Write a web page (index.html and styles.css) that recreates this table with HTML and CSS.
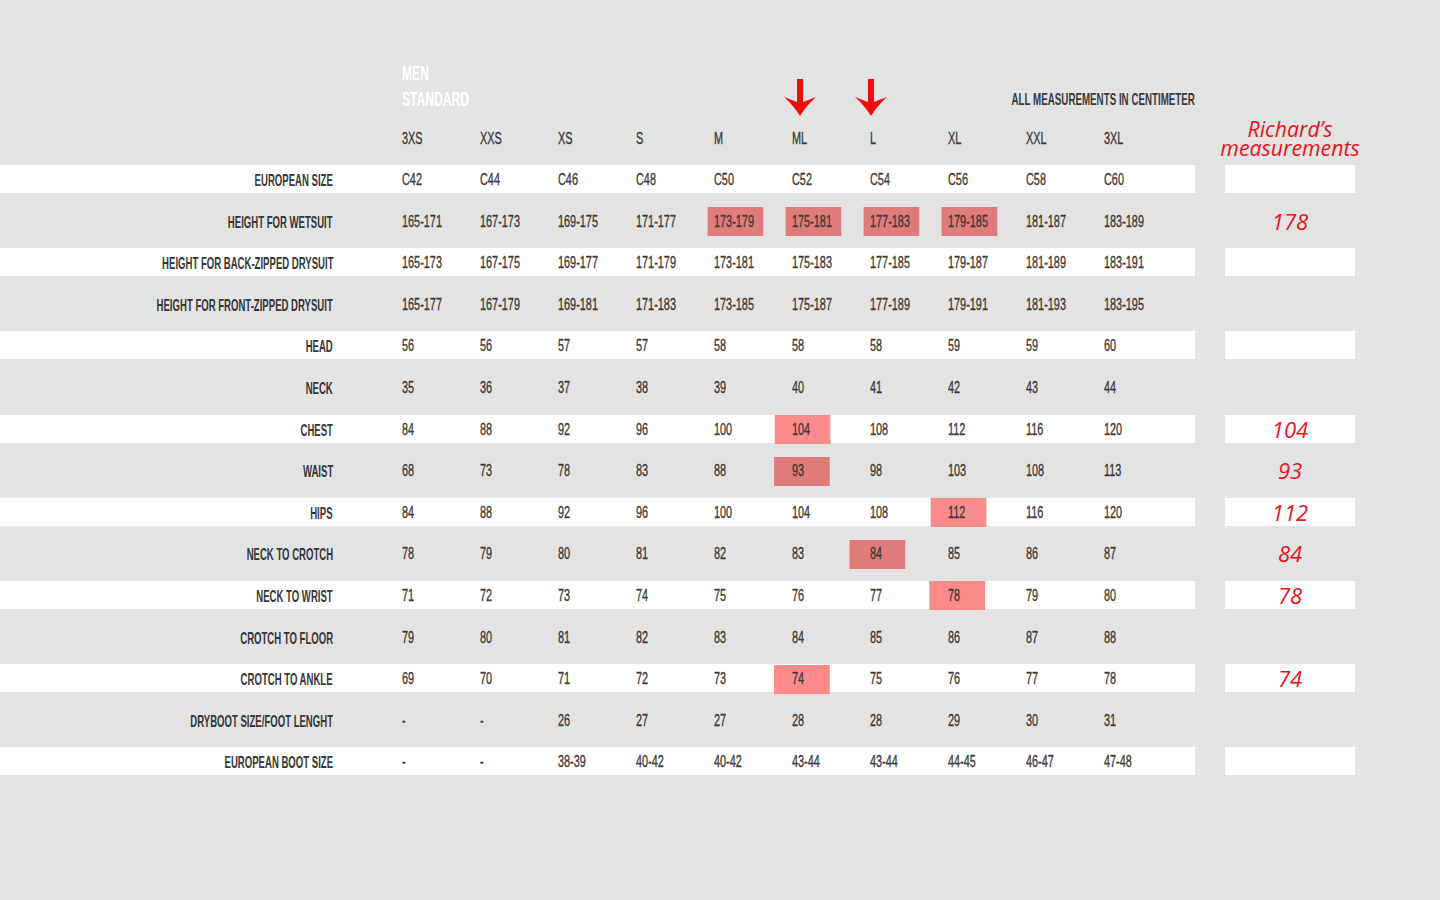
FILE: index.html
```html
<!DOCTYPE html>
<html lang="en">
<head>
<meta charset="utf-8">
<title>Men Standard size chart</title>
<link rel="stylesheet" href="styles.css">
</head>
<body>
<div class="page">
  <div class="row title-row">
    <div class="main">
      <div class="men"><div><span class="t">MEN</span></div><div><span class="t">STANDARD</span></div></div>
      <svg class="arrow arrow-ml" viewBox="0 0 32 37" width="32" height="37"><path d="M0 18 L13 23 L13 0 L19 0 L19 23 L32 18 Q22 27 16 37 Q10 27 0 18 Z" fill="#f20d0d"/></svg>
      <svg class="arrow arrow-l" viewBox="0 0 32 37" width="32" height="37"><path d="M0 18 L13 23 L13 0 L19 0 L19 23 L32 18 Q22 27 16 37 Q10 27 0 18 Z" fill="#f20d0d"/></svg>
      <div class="unit"><span class="t">ALL MEASUREMENTS IN CENTIMETER</span></div>
    </div>
    <div class="mine"></div>
  </div>

  <div class="row sizes-row">
    <div class="main">
      <div></div><div></div>
      <div class="v"><span>3XS</span></div>
      <div class="v"><span>XXS</span></div>
      <div class="v"><span>XS</span></div>
      <div class="v"><span>S</span></div>
      <div class="v"><span>M</span></div>
      <div class="v"><span>ML</span></div>
      <div class="v"><span>L</span></div>
      <div class="v"><span>XL</span></div>
      <div class="v"><span>XXL</span></div>
      <div class="v"><span>3XL</span></div>
    </div>
    <div class="mine"><div class="hand rich"><div>Richard’s</div><div>measurements</div></div></div>
  </div>

  <div class="table">
    <div class="row band">
      <div class="main">
        <div class="lab"><span>EUROPEAN SIZE</span></div><div></div>
        <div class="v"><span>C42</span></div><div class="v"><span>C44</span></div><div class="v"><span>C46</span></div><div class="v"><span>C48</span></div><div class="v"><span>C50</span></div><div class="v"><span>C52</span></div><div class="v"><span>C54</span></div><div class="v"><span>C56</span></div><div class="v"><span>C58</span></div><div class="v"><span>C60</span></div>
      </div>
      <div class="mine"></div>
    </div>

    <div class="row">
      <div class="main">
        <div class="lab"><span>HEIGHT FOR WETSUIT</span></div><div></div>
        <div class="v"><span>165-171</span></div><div class="v"><span>167-173</span></div><div class="v"><span>169-175</span></div><div class="v"><span>171-177</span></div><div class="v"><span class="hl">173-179</span></div><div class="v"><span class="hl">175-181</span></div><div class="v"><span class="hl">177-183</span></div><div class="v"><span class="hl">179-185</span></div><div class="v"><span>181-187</span></div><div class="v"><span>183-189</span></div>
      </div>
      <div class="mine"><span class="hand val">178</span></div>
    </div>

    <div class="row band">
      <div class="main">
        <div class="lab"><span>HEIGHT FOR BACK-ZIPPED DRYSUIT</span></div><div></div>
        <div class="v"><span>165-173</span></div><div class="v"><span>167-175</span></div><div class="v"><span>169-177</span></div><div class="v"><span>171-179</span></div><div class="v"><span>173-181</span></div><div class="v"><span>175-183</span></div><div class="v"><span>177-185</span></div><div class="v"><span>179-187</span></div><div class="v"><span>181-189</span></div><div class="v"><span>183-191</span></div>
      </div>
      <div class="mine"></div>
    </div>

    <div class="row">
      <div class="main">
        <div class="lab"><span>HEIGHT FOR FRONT-ZIPPED DRYSUIT</span></div><div></div>
        <div class="v"><span>165-177</span></div><div class="v"><span>167-179</span></div><div class="v"><span>169-181</span></div><div class="v"><span>171-183</span></div><div class="v"><span>173-185</span></div><div class="v"><span>175-187</span></div><div class="v"><span>177-189</span></div><div class="v"><span>179-191</span></div><div class="v"><span>181-193</span></div><div class="v"><span>183-195</span></div>
      </div>
      <div class="mine"></div>
    </div>

    <div class="row band">
      <div class="main">
        <div class="lab"><span>HEAD</span></div><div></div>
        <div class="v"><span>56</span></div><div class="v"><span>56</span></div><div class="v"><span>57</span></div><div class="v"><span>57</span></div><div class="v"><span>58</span></div><div class="v"><span>58</span></div><div class="v"><span>58</span></div><div class="v"><span>59</span></div><div class="v"><span>59</span></div><div class="v"><span>60</span></div>
      </div>
      <div class="mine"></div>
    </div>

    <div class="row">
      <div class="main">
        <div class="lab"><span>NECK</span></div><div></div>
        <div class="v"><span>35</span></div><div class="v"><span>36</span></div><div class="v"><span>37</span></div><div class="v"><span>38</span></div><div class="v"><span>39</span></div><div class="v"><span>40</span></div><div class="v"><span>41</span></div><div class="v"><span>42</span></div><div class="v"><span>43</span></div><div class="v"><span>44</span></div>
      </div>
      <div class="mine"></div>
    </div>

    <div class="row band">
      <div class="main">
        <div class="lab"><span>CHEST</span></div><div></div>
        <div class="v"><span>84</span></div><div class="v"><span>88</span></div><div class="v"><span>92</span></div><div class="v"><span>96</span></div><div class="v"><span>100</span></div><div class="v"><span class="hl">104</span></div><div class="v"><span>108</span></div><div class="v"><span>112</span></div><div class="v"><span>116</span></div><div class="v"><span>120</span></div>
      </div>
      <div class="mine"><span class="hand val">104</span></div>
    </div>

    <div class="row">
      <div class="main">
        <div class="lab"><span>WAIST</span></div><div></div>
        <div class="v"><span>68</span></div><div class="v"><span>73</span></div><div class="v"><span>78</span></div><div class="v"><span>83</span></div><div class="v"><span>88</span></div><div class="v"><span class="hl hl-short">93</span></div><div class="v"><span>98</span></div><div class="v"><span>103</span></div><div class="v"><span>108</span></div><div class="v"><span>113</span></div>
      </div>
      <div class="mine"><span class="hand val">93</span></div>
    </div>

    <div class="row band">
      <div class="main">
        <div class="lab"><span>HIPS</span></div><div></div>
        <div class="v"><span>84</span></div><div class="v"><span>88</span></div><div class="v"><span>92</span></div><div class="v"><span>96</span></div><div class="v"><span>100</span></div><div class="v"><span>104</span></div><div class="v"><span>108</span></div><div class="v"><span class="hl">112</span></div><div class="v"><span>116</span></div><div class="v"><span>120</span></div>
      </div>
      <div class="mine"><span class="hand val">112</span></div>
    </div>

    <div class="row">
      <div class="main">
        <div class="lab"><span>NECK TO CROTCH</span></div><div></div>
        <div class="v"><span>78</span></div><div class="v"><span>79</span></div><div class="v"><span>80</span></div><div class="v"><span>81</span></div><div class="v"><span>82</span></div><div class="v"><span>83</span></div><div class="v"><span class="hl">84</span></div><div class="v"><span>85</span></div><div class="v"><span>86</span></div><div class="v"><span>87</span></div>
      </div>
      <div class="mine"><span class="hand val">84</span></div>
    </div>

    <div class="row band">
      <div class="main">
        <div class="lab"><span>NECK TO WRIST</span></div><div></div>
        <div class="v"><span>71</span></div><div class="v"><span>72</span></div><div class="v"><span>73</span></div><div class="v"><span>74</span></div><div class="v"><span>75</span></div><div class="v"><span>76</span></div><div class="v"><span>77</span></div><div class="v"><span class="hl hl-right">78</span></div><div class="v"><span>79</span></div><div class="v"><span>80</span></div>
      </div>
      <div class="mine"><span class="hand val">78</span></div>
    </div>

    <div class="row">
      <div class="main">
        <div class="lab"><span>CROTCH TO FLOOR</span></div><div></div>
        <div class="v"><span>79</span></div><div class="v"><span>80</span></div><div class="v"><span>81</span></div><div class="v"><span>82</span></div><div class="v"><span>83</span></div><div class="v"><span>84</span></div><div class="v"><span>85</span></div><div class="v"><span>86</span></div><div class="v"><span>87</span></div><div class="v"><span>88</span></div>
      </div>
      <div class="mine"></div>
    </div>

    <div class="row band">
      <div class="main">
        <div class="lab"><span>CROTCH TO ANKLE</span></div><div></div>
        <div class="v"><span>69</span></div><div class="v"><span>70</span></div><div class="v"><span>71</span></div><div class="v"><span>72</span></div><div class="v"><span>73</span></div><div class="v"><span class="hl hl-short">74</span></div><div class="v"><span>75</span></div><div class="v"><span>76</span></div><div class="v"><span>77</span></div><div class="v"><span>78</span></div>
      </div>
      <div class="mine"><span class="hand val">74</span></div>
    </div>

    <div class="row">
      <div class="main">
        <div class="lab"><span>DRYBOOT SIZE/FOOT LENGHT</span></div><div></div>
        <div class="v"><span>-</span></div><div class="v"><span>-</span></div><div class="v"><span>26</span></div><div class="v"><span>27</span></div><div class="v"><span>27</span></div><div class="v"><span>28</span></div><div class="v"><span>28</span></div><div class="v"><span>29</span></div><div class="v"><span>30</span></div><div class="v"><span>31</span></div>
      </div>
      <div class="mine"></div>
    </div>

    <div class="row band">
      <div class="main">
        <div class="lab"><span>EUROPEAN BOOT SIZE</span></div><div></div>
        <div class="v"><span>-</span></div><div class="v"><span>-</span></div><div class="v"><span>38-39</span></div><div class="v"><span>40-42</span></div><div class="v"><span>40-42</span></div><div class="v"><span>43-44</span></div><div class="v"><span>43-44</span></div><div class="v"><span>44-45</span></div><div class="v"><span>46-47</span></div><div class="v"><span>47-48</span></div>
      </div>
      <div class="mine"></div>
    </div>
  </div>
</div>
</body>
</html>
```

FILE: styles.css
```css
* {
  box-sizing: border-box;
  margin: 0;
  padding: 0;
}

html,
body {
  background: #e3e3e3;
}

body {
  width: 1440px;
  height: 900px;
  overflow: hidden;
  font-family: "Liberation Sans", Arial, sans-serif;
  color: #383838;
}

.page {
  padding-top: 60px;
}

.row {
  display: flex;
  gap: 30px;
  height: 28px;
}

.main {
  width: 1195px;
  display: grid;
  grid-template-columns: 333px 69px repeat(10, 78px) 13px;
  align-items: center;
}

.mine {
  width: 130px;
  display: flex;
  align-items: center;
  justify-content: center;
}

.band .main,
.band .mine {
  background: #ffffff;
}

/* title */
.title-row {
  height: 52px;
}

.title-row .main {
  align-items: end;
}

.men {
  grid-column: 3;
  color: #ffffff;
  font-weight: bold;
  font-size: 19.5px;
  line-height: 26px;
  white-space: nowrap;
}

.t {
  display: inline-block;
  transform: scaleX(0.62);
  transform-origin: left center;
}

.arrow {
  display: block;
  align-self: end;
  margin-bottom: -4px;
}

.arrow-ml {
  grid-column: 8;
  margin-left: -8px;
}

.arrow-l {
  grid-column: 9;
  margin-left: -15px;
}

.unit {
  grid-column: 10 / 14;
  justify-self: end;
  font-weight: bold;
  font-size: 17px;
  line-height: 24px;
  white-space: nowrap;
  color: #3a3a3a;
}

.unit .t {
  transform: scaleX(0.575);
  transform-origin: right center;
}

/* sizes */
.sizes-row {
  margin-top: 12px;
}

/* table */
.table {
  margin-top: 13px;
  display: flex;
  flex-direction: column;
  gap: 13.6px;
}

.lab {
  justify-self: end;
  white-space: nowrap;
}

.lab span {
  display: inline-block;
  padding-top: 2px;
  font-weight: bold;
  font-size: 16.5px;
  line-height: 20px;
  color: #363636;
  transform: scaleX(0.58);
  transform-origin: right center;
}

.v {
  white-space: nowrap;
}

.v span {
  position: relative;
  display: inline-block;
  padding-top: 2px;
  font-size: 17px;
  line-height: 20px;
  color: #3a3a3a;
  -webkit-text-stroke: 0.35px #3a3a3a;
  transform: scaleX(0.64);
  transform-origin: left center;
}

.v .hl::before {
  content: "";
  position: absolute;
  left: 50%;
  top: 50%;
  width: 87px;
  height: 29px;
  margin: -13.5px 0 0 -41px;
  background: #e07b7d;
  z-index: -1;
}

.v .hl-short::before {
  margin-left: -37px;
}

.v .hl-right::before {
  margin-left: -38px;
}

.band .v .hl::before {
  background: #fb8a8b;
}

.hand {
  font-family: "Open Sans", "DejaVu Sans", sans-serif;
  font-style: italic;
  color: #e8131b;
}

.rich {
  font-size: 21.3px;
  line-height: 19px;
  text-align: center;
  white-space: nowrap;
}

.val {
  font-size: 22px;
  line-height: 28px;
}
```
